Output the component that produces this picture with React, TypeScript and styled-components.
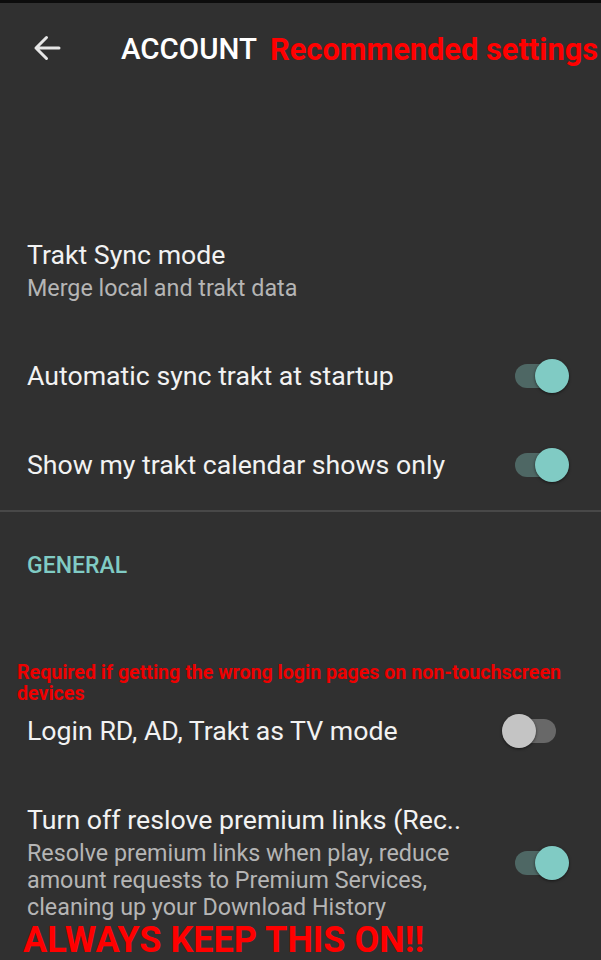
import styled, { createGlobalStyle } from "styled-components";

const GlobalStyle = createGlobalStyle`
  html, body {
    margin: 0;
    padding: 0;
    background: #303030;
  }
  body {
    font-family: Roboto, "Noto Sans", "Liberation Sans", sans-serif;
    color: #f0f0f0;
  }
`;

type Pref = {
  title: string;
  summary?: string[];
  on?: boolean;
  inset?: number;
};

type RowSpacing = { top: number; bottom: number };

function App() {
  return (
    <Screen>
      <GlobalStyle />
      <StatusStrip />
      <Toolbar>
        <BackButton aria-label="Back">
          <svg width="28" height="28" viewBox="0 0 28 28">
            <path
              d="M26 14H3M13.5 3.5L3 14l10.5 10.5"
              fill="none"
              stroke="#e6e6e6"
              strokeWidth="3"
              strokeLinecap="round"
              strokeLinejoin="round"
            />
          </svg>
        </BackButton>
        <Title>ACCOUNT</Title>
        <Callout>Recommended settings</Callout>
      </Toolbar>

      <Section>
        <Item
          title="Trakt Sync mode"
          summary={["Merge local and trakt data"]}
          spacing={{ top: 27.5, bottom: 29.5 }}
        />
        <Item title="Automatic sync trakt at startup" on />
        <Item title="Show my trakt calendar shows only" on />
      </Section>

      <Divider />

      <Category>GENERAL</Category>
      <Note>
        Required if getting the wrong login pages on non-touchscreen devices
      </Note>
      <Item
        title="Login RD, AD, Trakt as TV mode"
        on={false}
        inset={45}
        spacing={{ top: 10, bottom: 0 }}
      />
      <Item
        title="Turn off reslove premium links (Rec.."
        summary={[
          "Resolve premium links when play, reduce",
          "amount requests to Premium Services,",
          "cleaning up your Download History",
        ]}
        on
        spacing={{ top: 56.5, bottom: 1 }}
      />
      <Shout>ALWAYS KEEP THIS ON!!</Shout>
    </Screen>
  );
}

export default App;

function Item({
  title,
  summary,
  on,
  inset = 32,
  spacing = { top: 27.5, bottom: 27.5 },
}: Pref & { spacing?: RowSpacing }) {
  return (
    <Row $top={spacing.top} $bottom={spacing.bottom} $inset={inset}>
      <Texts>
        <ItemTitle>{title}</ItemTitle>
        {summary && (
          <Summary>
            {summary.map((line, i) => (
              <div key={i}>{line}</div>
            ))}
          </Summary>
        )}
      </Texts>
      {on !== undefined && (
        <Switch $on={on}>
          <Track $on={on} />
          <Thumb $on={on} />
        </Switch>
      )}
    </Row>
  );
}

const Screen = styled.div`
  width: 601px;
  height: 960px;
  overflow: hidden;
  background: #303030;
`;

const StatusStrip = styled.div`
  height: 3px;
  background: #0c0c0c;
`;

const Toolbar = styled.div`
  height: 92px;
  display: flex;
  align-items: center;
  padding-left: 33px;
`;

const BackButton = styled.div`
  width: 28px;
  height: 28px;
  display: flex;
  margin-right: 60px;
  margin-top: -2px;
`;

const Title = styled.span`
  font-size: 29.5px;
  font-weight: 500;
  color: #ffffff;
  margin-right: 13px;
  white-space: nowrap;
`;

const Callout = styled.span`
  font-size: 30.8px;
  font-weight: 700;
  color: #ff0000;
  white-space: nowrap;
`;

const Section = styled.div`
  padding-top: 116.5px;
`;

const Row = styled.div<{ $top: number; $bottom: number; $inset: number }>`
  display: flex;
  align-items: center;
  justify-content: space-between;
  padding: ${(p) => p.$top}px ${(p) => p.$inset}px ${(p) => p.$bottom}px 27px;
`;

const Texts = styled.div`
  display: flex;
  flex-direction: column;
  gap: 4px;
`;

const ItemTitle = styled.div`
  font-size: 26.7px;
  line-height: 32px;
  color: #f2f2f2;
  white-space: nowrap;
`;

const Summary = styled.div`
  font-size: 23.3px;
  line-height: 27px;
  color: #b5b5b5;
  white-space: nowrap;
`;

const Switch = styled.div<{ $on: boolean }>`
  position: relative;
  width: 54px;
  height: 34px;
  flex-shrink: 0;
`;

const Track = styled.div<{ $on: boolean }>`
  position: absolute;
  top: 5px;
  ${(p) => (p.$on ? "left: 0;" : "right: 0;")}
  width: 46px;
  height: 24px;
  border-radius: 12px;
  background: ${(p) => (p.$on ? "#4e6764" : "#686868")};
`;

const Thumb = styled.div<{ $on: boolean }>`
  position: absolute;
  top: 0;
  ${(p) => (p.$on ? "right: 0;" : "left: 0;")}
  width: 34px;
  height: 34px;
  border-radius: 50%;
  background: ${(p) => (p.$on ? "#80cbc4" : "#c4c4c4")};
  box-shadow: 0 1px 3px rgba(0, 0, 0, 0.55);
`;

const Divider = styled.div`
  height: 2px;
  background: #484848;
`;

const Category = styled.div`
  padding: 40.5px 27px 0;
  font-size: 23px;
  line-height: 28px;
  font-weight: 500;
  color: #80cbc4;
`;

const Note = styled.div`
  margin-top: 81.5px;
  padding: 0 30px 0 17px;
  font-size: 19.6px;
  line-height: 21px;
  font-weight: 700;
  color: #ee0000;
`;

const Shout = styled.div`
  padding-left: 23px;
  font-size: 36px;
  line-height: 36px;
  font-weight: 700;
  color: #ff0000;
  white-space: nowrap;
`;
